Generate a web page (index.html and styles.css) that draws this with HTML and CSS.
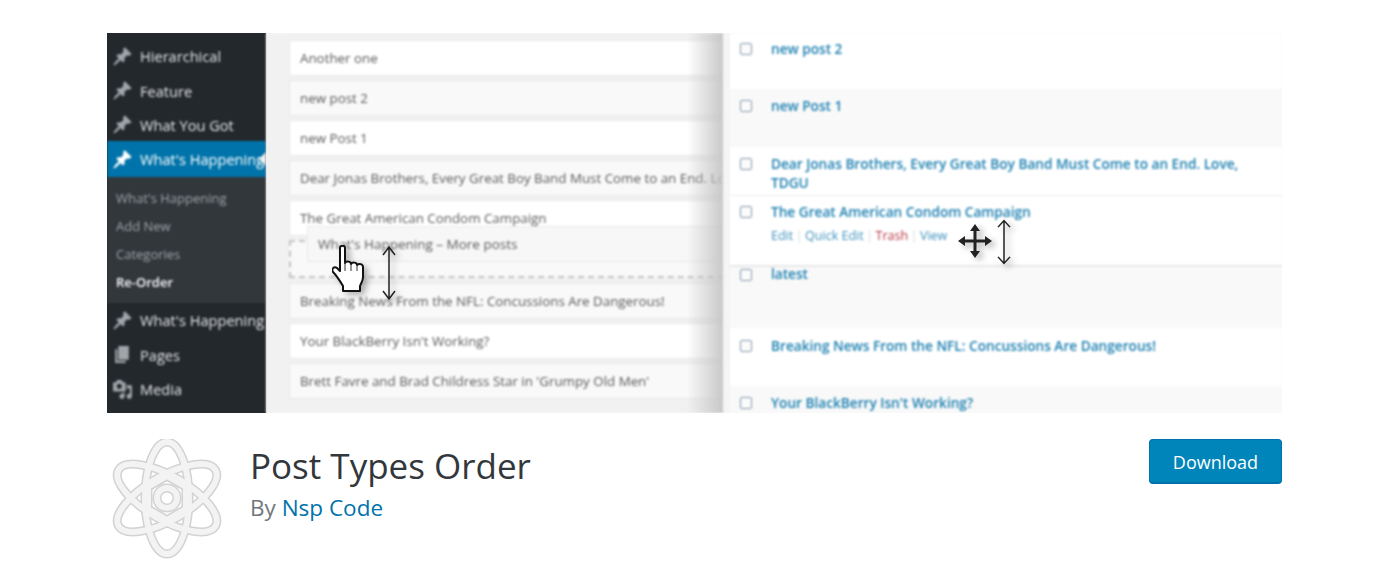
FILE: index.html

```html
<!DOCTYPE html>
<html lang="en">
<head>
  <meta charset="UTF-8">
  <title>Post Types Order</title>
  <link rel="stylesheet" href="styles.css">
</head>
<body>
  <svg class="defs" width="0" height="0">
    <symbol id="pin" viewBox="0 0 20 20"><path d="M10.44 3.02l1.82-1.82 6.36 6.35-1.83 1.82c-1.05-.68-2.48-.57-3.41.36l-.75.75c-.92.93-1.04 2.35-.35 3.41l-1.83 1.82-2.41-2.41-2.8 2.79c-.42.42-3.38 2.71-3.8 2.29s1.86-3.39 2.28-3.81l2.79-2.79L4.1 9.36l1.83-1.82c1.05.69 2.48.57 3.41-.36l.75-.75c.93-.92 1.04-2.35.35-3.41z"/></symbol>
    <symbol id="arrow" viewBox="0 0 16 56" preserveAspectRatio="none"><path d="M8 2v52M2 10l6-8 6 8M2 46l6 8 6-8" fill="none" stroke="#222" stroke-width="1.5"/></symbol>
  </svg>

  <div class="banner">
    <div class="sidebar">
      <div class="menu-item"><svg class="menu-icon"><use href="#pin"/></svg>Hierarchical</div>
      <div class="menu-item"><svg class="menu-icon"><use href="#pin"/></svg>Feature</div>
      <div class="menu-item"><svg class="menu-icon"><use href="#pin"/></svg>What You Got</div>
      <div class="menu-item active"><svg class="menu-icon"><use href="#pin"/></svg>What's Happening</div>
      <div class="submenu">
        <div class="sub-item">What's Happening</div>
        <div class="sub-item">Add New</div>
        <div class="sub-item">Categories</div>
        <div class="sub-item current">Re-Order</div>
      </div>
      <div class="menu-item"><svg class="menu-icon"><use href="#pin"/></svg>What's Happening</div>
      <div class="menu-item"><svg class="menu-icon" viewBox="0 0 20 20"><path d="M6 15V2h10v13H6zm-1 1h8v2H3V5h2v11z"/></svg>Pages</div>
      <div class="menu-item"><svg class="menu-icon" viewBox="0 0 20 20"><path d="M13 11V4c0-.55-.45-1-1-1h-1.67L9 1H5L3.67 3H2c-.55 0-1 .45-1 1v7c0 .55.45 1 1 1h10c.55 0 1-.45 1-1zM7 4.5c1.38 0 2.5 1.12 2.5 2.5S8.38 9.5 7 9.5 4.5 8.38 4.5 7 5.62 4.5 7 4.5zM14 6h5v10.5c0 1.38-1.12 2.5-2.5 2.5S14 17.88 14 16.5s1.12-2.5 2.5-2.5c.17 0 .34.02.5.05V9h-3V6zm-4 8.05V13h2v3.5c0 1.38-1.12 2.5-2.5 2.5S7 17.88 7 16.5 8.12 14 9.5 14c.17 0 .34.02.5.05z"/></svg>Media</div>
    </div>

    <div class="sort-list">
      <div class="sort-row">Another one</div>
      <div class="sort-row alt">new post 2</div>
      <div class="sort-row">new Post 1</div>
      <div class="sort-row alt">Dear Jonas Brothers, Every Great Boy Band Must Come to an End. Love, TDGU</div>
      <div class="sort-row short">The Great American Condom Campaign</div>
      <div class="sort-placeholder"></div>
      <div class="sort-row alt">Breaking News From the NFL: Concussions Are Dangerous!</div>
      <div class="sort-row">Your BlackBerry Isn't Working?</div>
      <div class="sort-row alt">Brett Favre and Brad Childress Star in 'Grumpy Old Men'</div>
      <div class="sort-row dragged">What's Happening – More posts</div>
      <div class="list-fade"></div>
    </div>

    <div class="post-table">
      <div class="post-row first"><span class="check"></span><a class="post-link">new post 2</a></div>
      <div class="post-row second alt"><span class="check"></span><a class="post-link">new Post 1</a></div>
      <div class="post-row third"><span class="check"></span><a class="post-link">Dear Jonas Brothers, Every Great Boy Band Must Come to an End. Love, TDGU</a></div>
      <div class="post-row fourth"><span class="check"></span>
        <div>
          <a class="post-link">The Great American Condom Campaign</a>
          <div class="row-actions"><span>Edit</span><i>|</i><span>Quick Edit</span><i>|</i><span class="trash">Trash</span><i>|</i><span>View</span></div>
        </div>
      </div>
      <div class="post-row fifth alt"><span class="check"></span><a class="post-link">latest</a></div>
      <div class="post-row sixth"><span class="check"></span><a class="post-link">Breaking News From the NFL: Concussions Are Dangerous!</a></div>
      <div class="post-row seventh alt"><span class="check"></span><a class="post-link">Your BlackBerry Isn't Working?</a></div>
    </div>

    <!-- cursors painted over the screenshot -->
    <svg class="cursor hand" viewBox="0 0 36 48"><path d="M8 3c0-3 5-3 5 0v15c1-2 6-2 6 1 1-2 6-2 6 1 2-2 6-1 6 2v10c0 4-2 6-3 9v5H11v-5C8 36 5 31 1 27c-2-3 1-6 4-4l3 3z" fill="#fff" stroke="#111" stroke-width="2" stroke-linejoin="round"/><path d="M13 17v9M19 19v7M25 21v5" stroke="#333" stroke-width="1"/></svg>
    <svg class="cursor arrow-left"><use href="#arrow"/></svg>
    <svg class="cursor move" viewBox="0 0 34 34"><path d="M17 3v28M3 17h28" stroke="#222" stroke-width="3"/><path d="M17 0l5 7H12zM17 34l5-7H12zM0 17l7-5v10zM34 17l-7-5v10z" fill="#222"/></svg>
    <svg class="cursor arrow-right"><use href="#arrow"/></svg>
  </div>

  <div class="plugin-head">
    <svg class="plugin-icon" viewBox="0 0 110 120">
      <g fill="none" stroke="#d2d2d2" stroke-width="9">
        <ellipse cx="55" cy="59" rx="22" ry="56"/>
        <ellipse cx="55" cy="59" rx="22" ry="56" transform="rotate(60 55 59)"/>
        <ellipse cx="55" cy="59" rx="22" ry="56" transform="rotate(-60 55 59)"/>
        <path d="M55 37l19 11v22l-19 11-19-11V48z"/>
        <circle cx="55" cy="59" r="10"/>
      </g>
      <g fill="none" stroke="#f3f3f3" stroke-width="6">
        <ellipse cx="55" cy="59" rx="22" ry="56"/>
        <ellipse cx="55" cy="59" rx="22" ry="56" transform="rotate(60 55 59)"/>
        <ellipse cx="55" cy="59" rx="22" ry="56" transform="rotate(-60 55 59)"/>
        <path d="M55 37l19 11v22l-19 11-19-11V48z"/>
        <circle cx="55" cy="59" r="10"/>
      </g>
    </svg>
    <div class="plugin-info">
      <h1 class="plugin-title">Post Types Order</h1>
      <div class="plugin-author">By <a class="author-link">Nsp Code</a></div>
    </div>
    <a class="download">Download</a>
  </div>
</body>
</html>
```

FILE: styles.css

```css
body {
  margin: 0;
  padding: 33px 118px 0 107px;
  background: #fff;
  font-family: "Open Sans", sans-serif;
  overflow: hidden;
}
.defs {
  position: absolute;
}
.banner {
  position: relative;
  display: flex;
  height: 380px;
  overflow: hidden;
  background: linear-gradient(to right, #23282d 159px, #f5f5f5 159px);
  font-size: 13.35px;
}
.banner > * {
  filter: blur(0.8px);
}

/* admin menu */
.sidebar {
  width: 159px;
  flex: none;
  padding-top: 6px;
  box-sizing: border-box;
  background: #23282d;
  color: #e4e5e6;
  font-size: 14.6px;
  overflow: hidden;
}
.menu-item {
  display: flex;
  align-items: center;
  height: 34.4px;
  white-space: nowrap;
  position: relative;
}
.menu-icon {
  width: 21px;
  height: 21px;
  margin: 0 7px 0 5px;
  flex: none;
  fill: #a0a5aa;
}
.menu-item.active {
  height: 36px;
  margin-top: -1px;
  background: #0073aa;
  color: #fff;
}
.menu-item.active .menu-icon {
  fill: #fff;
}
.menu-item.active::after {
  content: "";
  position: absolute;
  right: 0;
  top: 11px;
  border: 7px solid transparent;
  border-right-color: #f1f1f1;
  border-left-width: 0;
}
.submenu {
  height: 126px;
  padding-top: 7px;
  box-sizing: border-box;
  background: #32373c;
  color: #9ea3a8;
  font-size: 13px;
}
.sub-item {
  height: 28px;
  line-height: 28px;
  padding-left: 9px;
  white-space: nowrap;
}
.sub-item.current {
  color: #fff;
  font-weight: 600;
}

/* drag and drop list */
.sort-list {
  position: relative;
  width: 457px;
  flex: none;
  padding: 8px 0 0 23px;
  box-sizing: border-box;
  background: #f1f1f1;
  overflow: hidden;
  color: #5a5a5a;
}
.sort-row {
  height: 34px;
  line-height: 34px;
  margin: -1px 0 5px;
  padding-left: 10px;
  width: 600px;
  background: #fff;
  border: 1px solid #e8e8e8;
  white-space: nowrap;
}
.sort-row.alt {
  background: #f9f9f9;
}
.sort-row.short {
  margin-bottom: 4px;
}
.sort-placeholder {
  width: 600px;
  height: 34px;
  margin-bottom: 6px;
  background: #f9f9f9;
  border: 2px dashed #c4c4c4;
}
.sort-row.dragged {
  position: absolute;
  left: 41px;
  top: 193px;
  margin: 0;
  background: #f7f7f7;
  font-size: 13.5px;
}
.list-fade {
  position: absolute;
  top: 0;
  right: 0;
  bottom: 0;
  width: 36px;
  background: linear-gradient(to right, rgba(200, 200, 200, 0), rgba(195, 195, 195, 0.9));
}

/* posts table */
.post-table {
  flex: 1;
  margin-left: 7px;
  position: relative;
  background: #fff;
}
.post-row {
  display: flex;
  align-items: flex-start;
  height: 58px;
  padding: 7px 0 0 10px;
  box-sizing: border-box;
  line-height: 19px;
}
.post-row.first {
  height: 56px;
  padding-top: 6px;
}
.post-row.third {
  height: 46px;
}
.post-row.fourth {
  height: 72px;
  margin-top: 2px;
  padding-top: 6px;
  border-top: 1px solid #eee;
  border-bottom: 2px solid #e8e8e8;
}
.post-row.fifth {
  height: 61px;
  padding-top: 0;
}
.post-row.fifth .check {
  margin-top: 2px;
}
.post-row.fifth .post-link {
  margin-top: -3px;
}
.post-row.sixth {
  padding-top: 8px;
}
.post-row.alt {
  background: #f9f9f9;
}
.check {
  width: 10px;
  height: 10px;
  flex: none;
  margin: 4px 19px 0 0;
  border: 1.5px solid #7f98ad;
  border-radius: 2px;
  background: #fbfbfb;
}
.post-link {
  width: 480px;
  color: #1b7fb0;
  font-weight: 600;
  font-size: 13.65px;
}
.row-actions {
  margin-top: 4px;
  font-size: 12.5px;
  color: #3f92bd;
}
.row-actions i {
  margin: 0 2.5px;
  font-style: normal;
  color: #ddd;
}
.row-actions .trash {
  color: #b5323c;
}

/* cursors */
.banner > .cursor {
  position: absolute;
  filter: blur(0.5px) drop-shadow(4px 3px 3px rgba(0, 0, 0, 0.3));
}
.hand {
  left: 225px;
  top: 212px;
  width: 36px;
  height: 48px;
}
.arrow-left {
  left: 274px;
  top: 212px;
  width: 16px;
  height: 56px;
}
.move {
  left: 851px;
  top: 191px;
  width: 34px;
  height: 34px;
}
.arrow-right {
  left: 889px;
  top: 186px;
  width: 16px;
  height: 46px;
}

/* plugin header */
.plugin-head {
  display: flex;
  align-items: flex-start;
  margin-top: 26px;
}
.plugin-icon {
  width: 110px;
  height: 120px;
  flex: none;
  margin-left: 5px;
}
.plugin-info {
  flex: 1;
  margin-left: 28px;
}
.plugin-title {
  margin: 0;
  color: #32373c;
  font-size: 35px;
  font-weight: 400;
  line-height: 54px;
}
.plugin-author {
  color: #72777c;
  font-size: 22.5px;
  line-height: 30px;
}
.author-link {
  color: #0073aa;
}
.download {
  width: 133px;
  height: 45px;
  line-height: 44px;
  text-align: center;
  box-sizing: border-box;
  background: #0085ba;
  border: 1px solid #0073aa;
  border-bottom-width: 2px;
  border-radius: 4px;
  color: #fff;
  font-size: 18px;
}
```
